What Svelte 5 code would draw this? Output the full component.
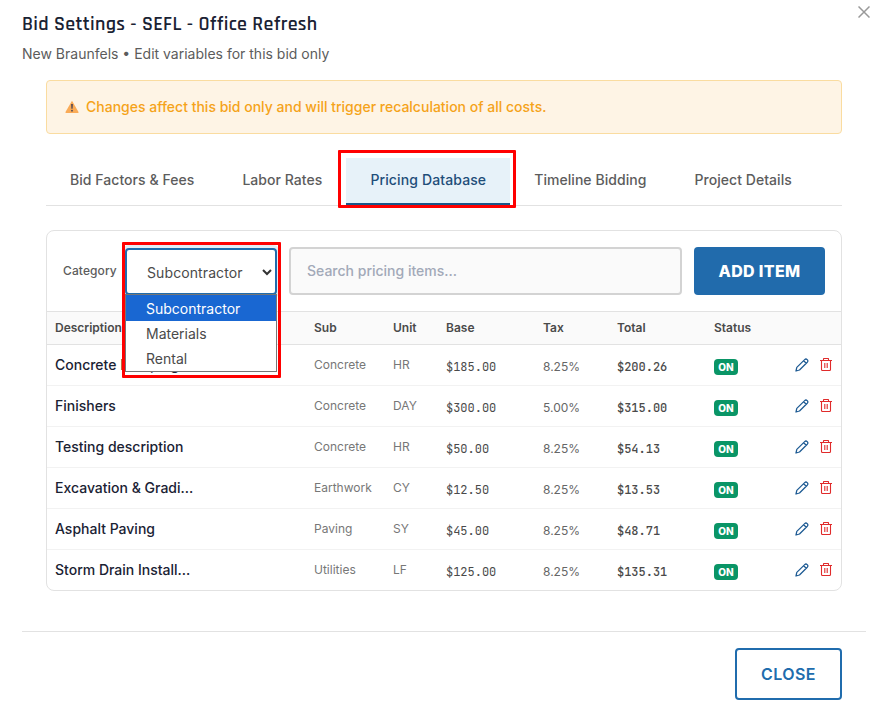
<script lang="ts">
  type Item = {
    description: string
    sub: string
    unit: string
    base: string
    tax: string
    total: string
  }

  const tabs = [
    'Bid Factors & Fees',
    'Labor Rates',
    'Pricing Database',
    'Timeline Bidding',
    'Project Details',
  ]
  const categories = ['Subcontractor', 'Materials', 'Rental']
  const items: Item[] = [
    { description: 'Concrete Pumping', sub: 'Concrete', unit: 'HR', base: '$185.00', tax: '8.25%', total: '$200.26' },
    { description: 'Finishers', sub: 'Concrete', unit: 'DAY', base: '$300.00', tax: '5.00%', total: '$315.00' },
    { description: 'Testing description', sub: 'Concrete', unit: 'HR', base: '$50.00', tax: '8.25%', total: '$54.13' },
    { description: 'Excavation & Gradi...', sub: 'Earthwork', unit: 'CY', base: '$12.50', tax: '8.25%', total: '$13.53' },
    { description: 'Asphalt Paving', sub: 'Paving', unit: 'SY', base: '$45.00', tax: '8.25%', total: '$48.71' },
    { description: 'Storm Drain Install...', sub: 'Utilities', unit: 'LF', base: '$125.00', tax: '8.25%', total: '$135.31' },
  ]

  let activeTab = $state('Pricing Database')
  let category = $state('Subcontractor')
  let search = $state('')
</script>

<div class="modal">
  <header class="header">
    <div>
      <h1>Bid Settings - SEFL - Office Refresh</h1>
      <p class="subtitle">New Braunfels • Edit variables for this bid only</p>
    </div>
    <button class="dismiss" aria-label="Close dialog">
      <svg width="12" height="12" viewBox="0 0 12 12" fill="none" stroke="#999" stroke-width="1.5">
        <path d="M.5.5l11 11M11.5.5l-11 11" />
      </svg>
    </button>
  </header>

  <main class="content">
    <div class="notice">
      <svg width="14" height="13" viewBox="0 0 14 13">
        <path d="M7 .7 13.5 12a.7.7 0 0 1-.6 1H1.1a.7.7 0 0 1-.6-1z" fill="#faab57" />
        <path d="M6.1 3.9h1.8l-.3 4.9H6.4z" fill="#4b4455" />
        <circle cx="7" cy="10.7" r=".9" fill="#4b4455" />
      </svg>
      <span>Changes affect this bid only and will trigger recalculation of all costs.</span>
    </div>

    <nav class="tabs">
      {#each tabs as tab}
        <button class="tab" class:active={tab === activeTab} onclick={() => (activeTab = tab)}>
          {tab}
          {#if tab === activeTab}
            <span class="callout callout-tab" aria-hidden="true"></span>
          {/if}
        </button>
      {/each}
    </nav>

    <section class="panel">
      <div class="toolbar">
        <span class="label">Category</span>
        <div class="select">
          <button class="select-value">
            {category}
            <svg width="10" height="7" viewBox="0 0 10 7" fill="none" stroke="#333" stroke-width="2">
              <path d="M1 1l4 4 4-4" />
            </svg>
          </button>
          <ul class="options">
            {#each categories as option}
              <li class:selected={option === category}>{option}</li>
            {/each}
          </ul>
          <span class="callout callout-select" aria-hidden="true"></span>
        </div>
        <input class="search" placeholder="Search pricing items..." bind:value={search} />
        <button class="add">ADD ITEM</button>
      </div>

      <table>
        <colgroup>
          <col class="w-description" />
          <col class="w-sub" />
          <col class="w-unit" />
          <col class="w-base" />
          <col class="w-tax" />
          <col class="w-total" />
          <col class="w-status" />
          <col />
        </colgroup>
        <thead>
          <tr>
            <th>Description</th>
            <th>Sub</th>
            <th>Unit</th>
            <th>Base</th>
            <th>Tax</th>
            <th>Total</th>
            <th>Status</th>
            <th></th>
          </tr>
        </thead>
        <tbody>
          {#each items as item}
            <tr>
              <td class="description">{item.description}</td>
              <td class="muted">{item.sub}</td>
              <td class="muted">{item.unit}</td>
              <td class="money">{item.base}</td>
              <td class="tax">{item.tax}</td>
              <td class="money total">{item.total}</td>
              <td><span class="badge">ON</span></td>
              <td>
                <div class="actions">
                  <svg width="14" height="14" viewBox="0 0 14 14" fill="none" stroke="#1d5a93" stroke-width="1.25" stroke-linejoin="round">
                    <path d="M1 13l.8-3.6 7.9-7.8q1.2-1.2 2.5 0t.1 2.6L4.5 12zM8.7 2.8l2.5 2.5" />
                  </svg>
                  <svg width="12" height="13" viewBox="0 0 12 13" fill="none" stroke="#e02b2b" stroke-width="1.1">
                    <path d="M0 2.5h12M3.5 2.5V1.1q0-.6.6-.6h3.8q.6 0 .6.6v1.4M1.5 2.5v9q0 1 1 1h7q1 0 1-1v-9M4.8 5v5M7.2 5v5" />
                  </svg>
                </div>
              </td>
            </tr>
          {/each}
        </tbody>
      </table>
    </section>
  </main>

  <footer class="footer">
    <button class="close">CLOSE</button>
  </footer>
</div>

<style>
  :global(body) {
    margin: 0;
    background: #fff;
  }

  .modal {
    box-sizing: border-box;
    width: 874px;
    height: 723px;
    padding: 0 8px 0 22px;
    overflow: hidden;
    font-family: Inter, 'Liberation Sans', sans-serif;
    color: #4a4a4a;
  }

  button {
    font-family: inherit;
    cursor: pointer;
  }

  /* Header */
  .header {
    display: flex;
    justify-content: space-between;
    height: 80px;
  }

  h1 {
    margin: 11px 0 0;
    font-family: Rajdhani, Roboto, sans-serif;
    font-size: 20px;
    font-weight: 600;
    line-height: 26px;
    letter-spacing: 0.3px;
    color: #1a2233;
  }

  .subtitle {
    margin: 7px 0 0;
    font-size: 14px;
    line-height: 20px;
    color: #5c5c5c;
  }

  .dismiss {
    align-self: flex-start;
    margin: 6px -4px 0 0;
    padding: 0;
    border: none;
    background: none;
    line-height: 0;
  }

  .content {
    width: 796px;
    margin-left: 24px;
  }

  .notice {
    display: flex;
    align-items: center;
    gap: 7px;
    box-sizing: border-box;
    height: 54px;
    padding: 0 0 1px 18px;
    border: 1px solid #fadca0;
    border-radius: 4px;
    background: #fef4e5;
    font-size: 14px;
    font-weight: 500;
    color: #f5a31a;
  }

  /* Tabs */
  .tabs {
    display: flex;
    height: 47px;
    margin-top: 24px;
    border-bottom: 1px solid #e2e2e2;
  }

  .tab {
    position: relative;
    height: 48px;
    padding: 0 24px 2px;
    border: none;
    border-bottom: 3px solid transparent;
    background: none;
    font-size: 14px;
    font-weight: 500;
    letter-spacing: 0.05px;
    color: #5c5c5c;
    white-space: nowrap;
  }

  .tab.active {
    border-bottom-color: #1b5689;
    background: #e7f2f9;
    letter-spacing: 0.12px;
    color: #1f4e79;
  }

  .callout {
    position: absolute;
    z-index: 3;
    box-sizing: border-box;
    border: 3px solid #f00;
    border-radius: 1px;
    pointer-events: none;
  }

  .callout-tab {
    inset: -8px -6px -5px -8px;
  }

  .callout-select {
    top: -6px;
    left: -3px;
    width: 159px;
    height: 136px;
  }

  /* Pricing panel */
  .panel {
    margin-top: 24px;
    border: 1px solid #e2e2e2;
    border-radius: 8px;
  }

  .toolbar {
    display: flex;
    align-items: center;
    height: 48px;
    padding: 16px;
  }

  .label {
    width: 62px;
    padding-bottom: 2px;
    font-size: 12px;
    font-weight: 500;
    letter-spacing: 0.1px;
    color: #5c5c5c;
  }

  .select {
    position: relative;
    width: 152px;
    margin: 1px 12px 0 0;
  }

  .select-value {
    display: flex;
    align-items: center;
    justify-content: space-between;
    width: 152px;
    height: 47px;
    padding: 1px 3px 0 20px;
    border: 2px solid #206cad;
    border-radius: 4px;
    background: #fff;
    box-shadow: 0 0 0 3px #e4edf5;
    font-size: 14px;
    letter-spacing: 0.1px;
    color: #4a4a4a;
  }

  .options {
    position: absolute;
    z-index: 2;
    top: 46px;
    left: 0;
    box-sizing: border-box;
    width: 152px;
    height: 78px;
    margin: 0;
    padding: 0;
    border: 1px solid #767676;
    background: #fff;
    list-style: none;
    font-size: 14px;
    line-height: 25px;
  }

  .options li {
    padding-left: 20px;
  }

  .options li.selected {
    padding-top: 1px;
    background: #1967d2;
    color: #fff;
  }

  .search {
    box-sizing: border-box;
    flex: 1;
    min-width: 0;
    height: 48px;
    margin-right: 12px;
    padding: 0 16px 1px;
    border: 2px solid #d3d3d3;
    border-radius: 4px;
    background: #fafafa;
    font-family: inherit;
    font-size: 14px;
    font-weight: 500;
  }

  .search::placeholder {
    color: #a2a9b8;
  }

  .add {
    width: 131px;
    height: 48px;
    padding: 0;
    border: none;
    border-radius: 4px;
    background: #216bac;
    font-size: 16px;
    font-weight: 800;
    letter-spacing: 0.35px;
    color: #fff;
  }

  table {
    width: 100%;
    table-layout: fixed;
    border-collapse: separate;
    border-spacing: 0;
  }

  .w-description { width: 259px; }
  .w-sub { width: 79px; }
  .w-unit { width: 53px; }
  .w-base { width: 97px; }
  .w-tax { width: 74px; }
  .w-total { width: 97px; }
  .w-status { width: 70px; }

  th {
    box-sizing: border-box;
    height: 34px;
    padding: 0 8px 1px;
    border-top: 1px solid #e2e2e2;
    border-bottom: 1px solid #e2e2e2;
    background: #fafafa;
    font-size: 12px;
    font-weight: 600;
    text-align: left;
    color: #4a4a4a;
  }

  td {
    box-sizing: border-box;
    height: 41px;
    padding: 0 8px 1px;
    border-bottom: 1px solid #f2f2f2;
    font-size: 12px;
    white-space: nowrap;
  }

  tbody tr:last-child td {
    height: 40px;
    border-bottom: none;
  }

  .description {
    font-size: 14px;
    font-weight: 500;
    color: #1a2233;
  }

  .muted {
    color: #777;
  }

  .money {
    padding-top: 4px;
    font-family: 'JetBrains Mono', 'DejaVu Sans Mono', monospace;
    font-size: 12px;
    letter-spacing: -0.02px;
  }

  .money.total {
    font-weight: 500;
  }

  .tax {
    padding-top: 3px;
    font-size: 12px;
    color: #666;
  }

  .badge {
    display: inline-block;
    width: 24px;
    height: 16px;
    margin-top: 4px;
    border-radius: 4px;
    background: #0a9566;
    font-size: 10px;
    font-weight: 800;
    line-height: 17px;
    text-align: center;
    color: #fff;
    vertical-align: middle;
  }

  .actions {
    display: flex;
    justify-content: flex-end;
    align-items: center;
    gap: 11px;
    padding-right: 1px;
  }

  /* Footer */
  .footer {
    display: flex;
    justify-content: flex-end;
    margin-top: 40px;
    padding: 16px 24px 0 0;
    border-top: 1px solid #e2e2e2;
  }

  .close {
    box-sizing: border-box;
    width: 107px;
    height: 52px;
    padding: 0;
    border: 2px solid #206cad;
    border-radius: 4px;
    background: #fff;
    font-size: 16px;
    font-weight: 600;
    letter-spacing: 0.4px;
    color: #206cad;
  }
</style>
